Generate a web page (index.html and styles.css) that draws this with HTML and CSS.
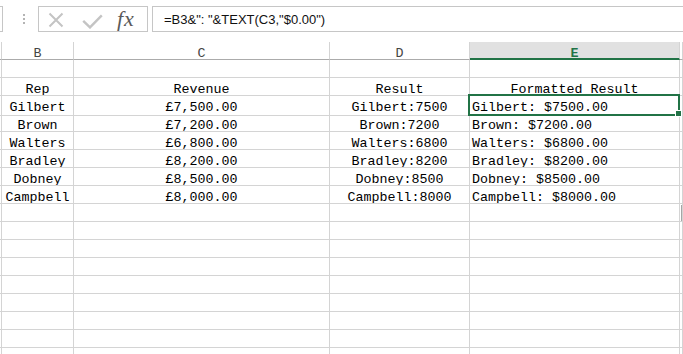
FILE: index.html
```html
<!DOCTYPE html>
<html lang="en">
<head>
    <meta charset="UTF-8">
    <meta name="viewport" content="width=device-width, initial-scale=1.0">
    <title>Formatted Result</title>
    <link rel="stylesheet" href="styles.css">
</head>
<body>
    <div class="toolbar">
        <div class="name-box"></div>
        <div class="grip"></div>
        <div class="fx-box">
            <svg class="icon-cancel" width="16" height="16" viewBox="0 0 16 16">
                <path d="M1.5 1.5 L14.5 14.5 M14.5 1.5 L1.5 14.5" stroke="#c4c4c4" stroke-width="2" fill="none"/>
            </svg>
            <svg class="icon-enter" width="21" height="15" viewBox="0 0 21 15">
                <path d="M1.2 6.8 L8 13.4 L19.8 1.4" stroke="#c4c4c4" stroke-width="2.4" fill="none"/>
            </svg>
            <span class="fx">fx</span>
        </div>
        <div class="formula">=B3&amp;": "&amp;TEXT(C3,"$0.00")</div>
    </div>

    <div class="sheet">
        <div class="row head">
            <div class="cell"></div>
            <div class="cell c">B</div>
            <div class="cell c">C</div>
            <div class="cell c">D</div>
            <div class="cell c active">E</div>
            <div class="cell"></div>
        </div>
        <div class="row">
            <div class="cell"></div><div class="cell"></div><div class="cell"></div><div class="cell"></div><div class="cell"></div><div class="cell"></div>
        </div>
        <div class="row">
            <div class="cell"></div>
            <div class="cell c">Rep</div>
            <div class="cell c">Revenue</div>
            <div class="cell c">Result</div>
            <div class="cell c">Formatted Result</div>
            <div class="cell"></div>
        </div>
        <div class="row">
            <div class="cell"></div>
            <div class="cell c">Gilbert</div>
            <div class="cell c">£7,500.00</div>
            <div class="cell c">Gilbert:7500</div>
            <div class="cell l selected">Gilbert: $7500.00<span class="sel-frame"><span class="fill-handle"></span></span></div>
            <div class="cell"></div>
        </div>
        <div class="row">
            <div class="cell"></div>
            <div class="cell c">Brown</div>
            <div class="cell c">£7,200.00</div>
            <div class="cell c">Brown:7200</div>
            <div class="cell l">Brown: $7200.00</div>
            <div class="cell"></div>
        </div>
        <div class="row">
            <div class="cell"></div>
            <div class="cell c">Walters</div>
            <div class="cell c">£6,800.00</div>
            <div class="cell c">Walters:6800</div>
            <div class="cell l">Walters: $6800.00</div>
            <div class="cell"></div>
        </div>
        <div class="row">
            <div class="cell"></div>
            <div class="cell c">Bradley</div>
            <div class="cell c">£8,200.00</div>
            <div class="cell c">Bradley:8200</div>
            <div class="cell l">Bradley: $8200.00</div>
            <div class="cell"></div>
        </div>
        <div class="row">
            <div class="cell"></div>
            <div class="cell c">Dobney</div>
            <div class="cell c">£8,500.00</div>
            <div class="cell c">Dobney:8500</div>
            <div class="cell l">Dobney: $8500.00</div>
            <div class="cell"></div>
        </div>
        <div class="row">
            <div class="cell"></div>
            <div class="cell c">Campbell</div>
            <div class="cell c">£8,000.00</div>
            <div class="cell c">Campbell:8000</div>
            <div class="cell l">Campbell: $8000.00</div>
            <div class="cell"></div>
        </div>
        <div class="row"><div class="cell"></div><div class="cell"></div><div class="cell"></div><div class="cell"></div><div class="cell"></div><div class="cell"><span class="paste-options"></span></div></div>
        <div class="row"><div class="cell"></div><div class="cell"></div><div class="cell"></div><div class="cell"></div><div class="cell"></div><div class="cell"></div></div>
        <div class="row"><div class="cell"></div><div class="cell"></div><div class="cell"></div><div class="cell"></div><div class="cell"></div><div class="cell"></div></div>
        <div class="row"><div class="cell"></div><div class="cell"></div><div class="cell"></div><div class="cell"></div><div class="cell"></div><div class="cell"></div></div>
        <div class="row"><div class="cell"></div><div class="cell"></div><div class="cell"></div><div class="cell"></div><div class="cell"></div><div class="cell"></div></div>
        <div class="row"><div class="cell"></div><div class="cell"></div><div class="cell"></div><div class="cell"></div><div class="cell"></div><div class="cell"></div></div>
        <div class="row"><div class="cell"></div><div class="cell"></div><div class="cell"></div><div class="cell"></div><div class="cell"></div><div class="cell"></div></div>
        <div class="row"><div class="cell"></div><div class="cell"></div><div class="cell"></div><div class="cell"></div><div class="cell"></div><div class="cell"></div></div>
        <div class="row"><div class="cell"></div><div class="cell"></div><div class="cell"></div><div class="cell"></div><div class="cell"></div><div class="cell"></div></div>
    </div>
</body>
</html>
```

FILE: styles.css
```css
body {
    margin: 0;
    width: 683px;
    height: 354px;
    overflow: hidden;
    background: #fff;
    font-family: "Liberation Mono", monospace;
    font-size: 13.33px;
    color: #000;
}
.toolbar {
    display: flex;
    align-items: flex-start;
    height: 42px;
    padding-top: 6px;
    box-sizing: border-box;
    overflow: hidden;
}
.name-box {
    flex: none;
    width: 2px;
    height: 24px;
    border: 1px solid #c6c6c6;
    border-left: none;
}
.grip {
    flex: none;
    width: 2px;
    height: 11px;
    margin: 8px 0 0 20px;
    background: repeating-linear-gradient(#b4b4b4 0 2px, transparent 2px 4px);
}
.fx-box {
    flex: none;
    display: flex;
    align-items: center;
    width: 99px;
    height: 24px;
    margin-left: 13px;
    padding-left: 9px;
    border: 1px solid #c6c6c6;
}
.icon-cancel {
    flex: none;
    margin-top: 1px;
}
.icon-enter {
    flex: none;
    margin: 4px 0 0 18px;
}
.fx {
    margin-left: 14px;
    font-family: "Liberation Serif", serif;
    font-style: italic;
    font-size: 22px;
    letter-spacing: 1px;
    color: #5a5a5a;
    line-height: 24px;
}
.formula {
    flex: none;
    width: 560px;
    height: 24px;
    margin-left: 4px;
    padding-left: 11px;
    border: 1px solid #c6c6c6;
    font-family: "Liberation Sans", sans-serif;
    font-size: 13px;
    line-height: 25px;
    color: #111;
}
.sheet {
    position: relative;
}
.row {
    display: grid;
    grid-template-columns: 2px 72px 256px 140px 210px 1fr;
    height: 18px;
}
.cell {
    position: relative;
    box-sizing: border-box;
    border-right: 1px solid #d4d4d4;
    border-bottom: 1px solid #d4d4d4;
    padding-top: 4px;
    line-height: 15px;
    white-space: nowrap;
    overflow: hidden;
}
.cell.c {
    text-align: center;
}
.cell.l {
    padding-left: 2px;
}
.head .cell {
    border-bottom-color: #ababab;
    color: #444;
}
.head .cell.active {
    background: #e1e1e1;
    color: #217346;
    font-weight: bold;
    border-bottom: 2px solid #217346;
}
.cell.selected {
    overflow: visible;
}
.sel-frame {
    position: absolute;
    top: -2px;
    left: -2px;
    right: -1px;
    bottom: -1px;
    border: 2px solid #217346;
    z-index: 2;
}
.fill-handle {
    position: absolute;
    right: -4px;
    bottom: -3px;
    width: 5px;
    height: 5px;
    background: #217346;
    border: 1px solid #fff;
}
.paste-options {
    position: absolute;
    top: 1px;
    left: 1px;
    width: 20px;
    height: 18px;
    border: 1px solid #a6a6a6;
    background: #fff;
    z-index: 1;
}
```
